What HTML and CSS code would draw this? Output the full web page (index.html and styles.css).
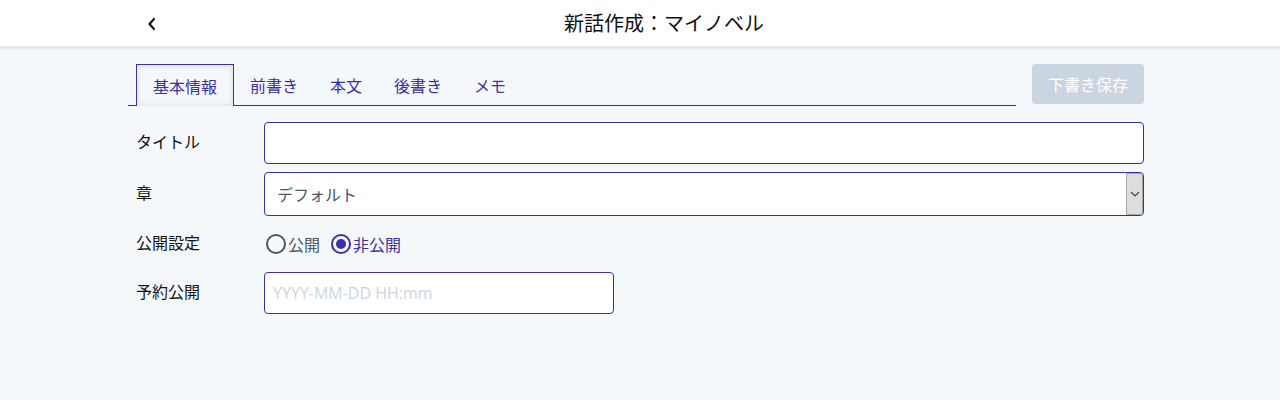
FILE: index.html
```html
<!DOCTYPE html>
<html lang="ja">
<head>
<meta charset="utf-8">
<title>新話作成：マイノベル</title>
<link rel="stylesheet" href="styles.css">
</head>
<body>
<header class="topbar">
  <div class="topbar-inner">
    <button class="back" aria-label="戻る">
      <svg width="10" height="14" viewBox="0 0 10 14"><polyline points="7,2 2.5,7 7,12" fill="none" stroke="#111" stroke-width="2.2" stroke-linecap="round" stroke-linejoin="round"/></svg>
    </button>
    <h1 class="title">新話作成：マイノベル</h1>
  </div>
</header>
<main class="main">
  <div class="toolbar">
    <nav class="tabs">
      <a class="tab active">基本情報</a>
      <a class="tab">前書き</a>
      <a class="tab">本文</a>
      <a class="tab">後書き</a>
      <a class="tab">メモ</a>
    </nav>
    <button class="save" disabled>下書き保存</button>
  </div>
  <form class="form">
    <label class="label">タイトル</label>
    <input class="input" type="text">
    <label class="label">章</label>
    <div class="select">
      <span class="select-value">デフォルト</span>
      <span class="select-arrow">
        <svg width="10" height="6" viewBox="0 0 10 6"><polyline points="1,1 5,5 9,1" fill="none" stroke="#444" stroke-width="1.2"/></svg>
      </span>
    </div>
    <label class="label">公開設定</label>
    <div class="radios">
      <label class="radio"><span class="dot"></span>公開</label>
      <label class="radio checked"><span class="dot"></span>非公開</label>
    </div>
    <label class="label">予約公開</label>
    <input class="input date" type="text" placeholder="YYYY-MM-DD HH:mm">
  </form>
</main>
</body>
</html>
```
FILE: styles.css
```css
* { box-sizing: border-box; }
html, body { margin: 0; padding: 0; }
body {
  background: #f5f8fb;
  font-family: "Noto Sans CJK JP", "Noto Sans", sans-serif;
  color: #111;
  font-size: 16px;
}
.topbar {
  background: #fff;
  height: 47px;
  box-shadow: 0 1px 3px rgba(0,0,0,0.12);
  border-bottom: 1px solid #e6e9ee;
}
.topbar-inner {
  width: 1024px;
  margin: 0 auto;
  height: 100%;
  display: flex;
  align-items: center;
}
.back {
  width: 48px;
  height: 32px;
  border: 0;
  background: none;
  display: flex;
  align-items: center;
  justify-content: center;
  padding: 0;
  margin-top: 1px;
}
.title {
  flex: 1;
  text-align: center;
  margin: 0 0 2px;
  font-size: 20px;
  font-weight: 400;
  color: #111;
}
.main {
  width: 1024px;
  margin: 0 auto;
  padding: 17px 8px 0 0;
}
.toolbar {
  display: flex;
  gap: 16px;
  align-items: flex-start;
}
.tabs {
  flex: 1;
  display: flex;
  padding-left: 8px;
  border-bottom: 1px solid #3b2fa5;
  height: 42px;
}
.tab {
  height: 41px;
  padding: 0 16px;
  display: flex;
  align-items: center;
  color: #3b2fa5;
  font-size: 16px;
}
.tab.active {
  border: 1px solid #3b2fa5;
  border-bottom: 0;
  height: 42px;
  background: #f5f8fb;
  box-shadow: inset 0 0 6px rgba(0,0,0,0.12);
  margin-bottom: -1px;
  padding: 0 16px;
}
.save {
  width: 112px;
  height: 40px;
  border: 0;
  border-radius: 4px;
  background: #cbd5e1;
  color: #fff;
  font-family: inherit;
  font-size: 16px;
}
.form {
  display: grid;
  grid-template-columns: 128px 1fr;
  row-gap: 8px;
  margin-top: 16px;
  padding-left: 8px;
  align-items: center;
}
.label {
  font-size: 16px;
  line-height: 20px;
  color: #111;
  margin-top: -5px;
}
.input {
  height: 42px;
  border: 1px solid #3b2fa5;
  border-radius: 4px;
  background: #fff;
  font-family: "Open Sans", "Noto Sans CJK JP", sans-serif;
  font-size: 16px;
  padding: 0 8px;
  width: 880px;
}
.input::placeholder { color: #cbd5e1; }
.input.date { width: 350px; }
.select {
  width: 880px;
  height: 44px;
  border: 1px solid #3b2fa5;
  border-radius: 4px;
  background: #fff;
  display: flex;
  align-items: stretch;
}
.select-value {
  flex: 1;
  display: flex;
  align-items: center;
  padding-left: 12px;
  color: #4b5563;
}
.select-arrow {
  width: 17px;
  background: #dddddd;
  border: 1px solid #a9a9a9;
  border-radius: 0 3px 3px 0;
  display: flex;
  align-items: center;
  justify-content: center;
}
.radios {
  display: flex;
  align-items: center;
  gap: 9px;
  height: 40px;
}
.radio {
  display: flex;
  align-items: center;
  gap: 2px;
  color: #4b5563;
}
.radio.checked { color: #3b2fa5; }
.dot {
  width: 20px;
  height: 20px;
  border: 2px solid #4b5563;
  border-radius: 50%;
  margin-left: 2px;
  display: flex;
  align-items: center;
  justify-content: center;
}
.radio.checked .dot { border-color: #3b2fa5; }
.radio.checked .dot::after {
  content: "";
  width: 10px;
  height: 10px;
  border-radius: 50%;
  background: #3b2fa5;
}
```
